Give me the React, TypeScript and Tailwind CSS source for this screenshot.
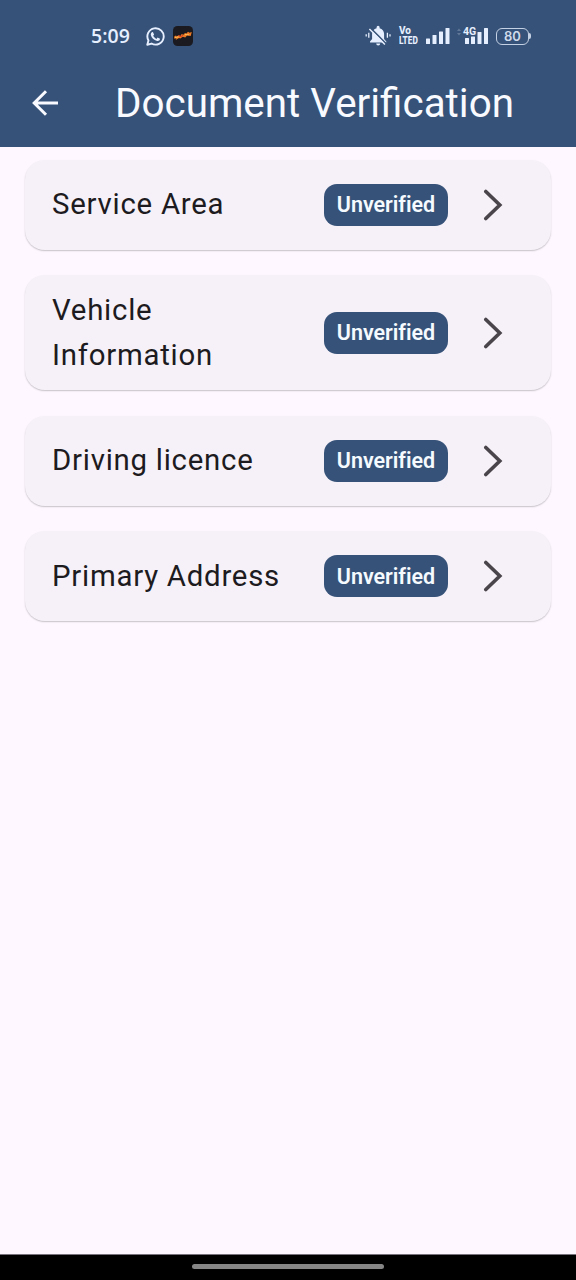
const documents = [
  { title: 'Service Area', status: 'Unverified', height: 'h-[90px]' },
  { title: 'Vehicle Information', status: 'Unverified', height: 'h-[115px]' },
  { title: 'Driving licence', status: 'Unverified', height: 'h-[90px]' },
  { title: 'Primary Address', status: 'Unverified', height: 'h-[90px]' },
];

function StatusBar() {
  return (
    <div className="flex h-[72px] items-center pl-[91px] text-[#e6efff]">
      <span className="w-[55px] font-['Open_Sans',sans-serif] text-[19.5px] font-semibold leading-6">5:09</span>
      <svg className="h-[19px] w-[19px] shrink-0" viewBox="0 0 24 24" fill="none">
        <path d="M1.6 22.4 3.1 17A10.3 10.3 0 1 1 7 20.9Z" stroke="currentColor" strokeWidth="2.4" strokeLinejoin="round" />
        <path d="M8.8 6.5 10.2 9.6 9.1 11.1c1 1.9 2.1 3 4.1 3.9l1.4-1.6 3.1 1.5c-.1 2.2-1.9 3.1-3.7 2.7-4.1-.9-7.1-4-7.9-7.5-.3-1.6.8-3.9 2.6-3.7Z" fill="currentColor" />
      </svg>
      <svg className="ml-[8px] h-5 w-5 shrink-0" viewBox="0 0 20 20">
        <rect width="20" height="20" rx="4.5" fill="#1b1a20" />
        <path d="M1 10.8 3.2 9.2 3 10.6 6 9.2 7.3 9.9 8.7 8 10.3 8.8 12 6.9 13.4 7.6 15 5.8 16.5 6.8 18.8 6 17.7 10 14 9.5 12.3 11.4 9.7 10.8 7.3 12.6 6 11.9 2.6 14 3.4 12.3 1.4 12.8Z" fill="#ed7a24" />
        <path d="M2 11.5 6 10.8M12 8.5l4 .3" stroke="#ffd165" strokeWidth=".8" />
        <path d="m5 9.6 3 1 2-1.4" stroke="#d83524" strokeWidth=".9" fill="none" />
      </svg>
      <svg className="ml-[172px] h-6 w-[26px] shrink-0" viewBox="0 0 26 24" fill="currentColor">
        <path d="M5 17.5 7.1 15V10c0-3 1.9-5 4.5-5.7V3.2a1.5 1.5 0 0 1 3 0v1.1c2.7.7 4.5 2.7 4.5 5.7v5l2.2 2.5v1H5Z" />
        <path d="M11.2 19.5h4a2 2 0 0 1-4 0Z" />
        <path d="M5.6 4.1 21 19.5" stroke="#365278" strokeWidth="1.6" />
        <path d="m4.4 5 15.5 15.5" stroke="currentColor" strokeWidth="1.5" />
        <path d="M3.8 8.8v5M1.2 10.2v2.2M22.4 8.8v5M25 10.2v2.2" stroke="currentColor" strokeWidth="1.3" />
      </svg>
      <div className="ml-[8px] flex h-5 w-5 shrink-0 flex-col font-['Roboto',sans-serif] text-[10px] font-extrabold leading-[10px]">
        <span>Vo</span>
        <span className="origin-left scale-x-[0.83]">LTED</span>
      </div>
      <svg className="ml-[7px] h-[18px] w-6 shrink-0" viewBox="0 0 24 18" fill="currentColor">
        <rect x="0" y="11.5" width="4" height="5.5" rx=".5" /><rect x="6.5" y="8" width="4" height="9" rx=".5" /><rect x="13" y="4.5" width="4" height="12.5" rx=".5" /><rect x="19.5" y="1" width="4" height="16" rx=".5" />
      </svg>
      <div className="relative ml-[7px] h-[18px] w-8 shrink-0">
        <svg className="h-[18px] w-8" viewBox="0 0 32 18" fill="currentColor">
          <path d="m0 4 2-2.4L4 4ZM0 6l2 2.4L4 6Z" opacity=".25" />
          <rect x="8" y="11" width="4" height="6" rx=".5" /><rect x="14" y="9.5" width="4" height="7.5" rx=".5" /><rect x="20.5" y="5" width="4" height="12" rx=".5" /><rect x="27" y="1" width="4" height="16" rx=".5" />
        </svg>
        <span className="absolute left-[6px] top-0 font-['Roboto',sans-serif] text-[10.5px] font-bold leading-[9px]">4G</span>
      </div>
      <div className="ml-[7px] flex items-center">
        <div className="flex h-[17px] w-[33px] items-center justify-center rounded-[6px] border-[1.5px] border-[#c4d0e3] font-['Inter',sans-serif] text-[13px] font-semibold leading-none text-[#d0daea]">80</div>
        <div className="h-[6px] w-[2px] rounded-r-sm bg-[#c4d0e3]" />
      </div>
    </div>
  );
}

export default function App() {
  return (
    <div className="flex h-[1280px] w-[576px] flex-col overflow-hidden bg-[#fef7ff] font-['Roboto',sans-serif]">
      <header className="h-[147px] shrink-0 bg-[#365278]">
        <StatusBar />
        <div className="flex h-[62px] items-center pl-[32px] text-[#f8faff]">
          <button aria-label="Back" className="shrink-0">
            <svg className="h-[26px] w-[26px]" viewBox="0 0 26 26" fill="none" stroke="currentColor" strokeWidth="3">
              <path d="M14 1.2 2.2 13 14 24.8M2.2 13H26" />
            </svg>
          </button>
          <h1 className="ml-[57px] whitespace-nowrap pt-[2px] text-[40.4px] leading-[50px]">Document Verification</h1>
        </div>
      </header>
      <main className="flex flex-1 flex-col gap-[25.6px] px-[25px] pt-[12.6px]">
        {documents.map((item) => (
          <button key={item.title} className={`flex w-full shrink-0 items-center rounded-[20px] bg-[#f6f1f9] pl-[27px] text-left shadow-[0_1px_1.5px_rgba(0,0,0,0.22)] ${item.height}`}>
            <span className="w-[272px] pr-[40px] text-[29.4px] leading-[45px] tracking-[0.75px] text-[#1d1b20]">{item.title}</span>
            <span className="flex h-[42px] w-[124px] shrink-0 items-center justify-center rounded-[13px] bg-[#365278] text-[21.5px] font-semibold leading-none tracking-[-0.02px] text-[#f5faff]">{item.status}</span>
            <svg className="ml-[35px] h-8 w-5 shrink-0" viewBox="0 0 20 32" fill="none">
              <path d="m2.8 2.5 14 13.5-14 13.5" stroke="#49454a" strokeWidth="3.6" strokeLinecap="round" />
            </svg>
          </button>
        ))}
      </main>
      <footer className="flex h-[26px] shrink-0 justify-center border-t border-[#77727b] bg-black pt-[9px]">
        <div className="h-[5px] w-[192px] rounded-full bg-[#858585]" />
      </footer>
    </div>
  );
}
